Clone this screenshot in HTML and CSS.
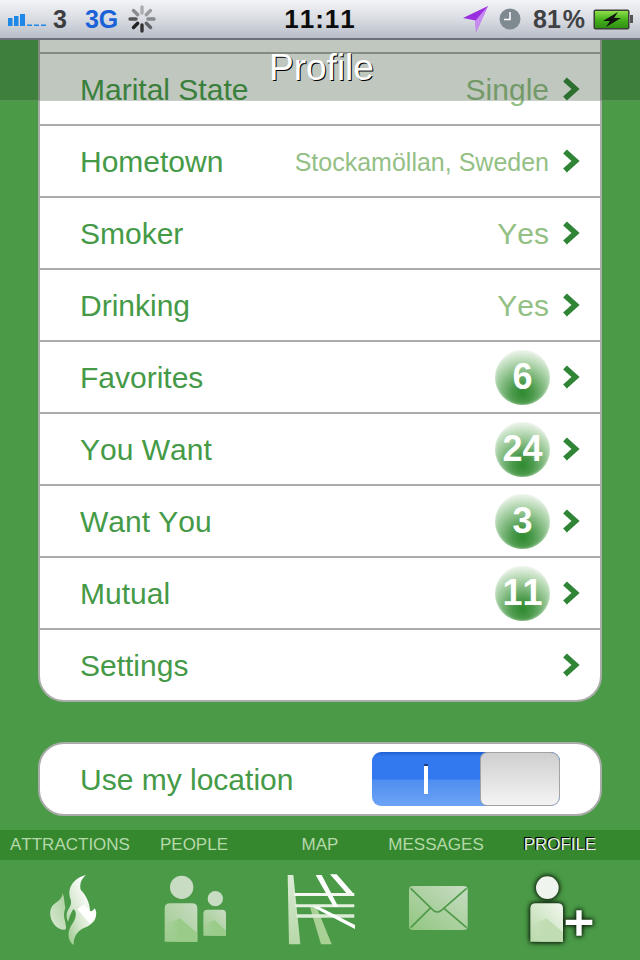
FILE: index.html
```html
<!DOCTYPE html>
<html lang="en">
<head>
    <meta charset="UTF-8">
    <title>Profile</title>
    <link rel="stylesheet" href="styles.css">
</head>
<body>
    <div class="screen">
        <div class="status-bar">
            <div class="status-left">
                <svg class="signal" width="40" height="12" viewBox="0 0 40 12">
                    <rect x="0" y="4" width="4.5" height="8" fill="#1e88e8"/>
                    <rect x="6" y="2" width="4.5" height="10" fill="#1e88e8"/>
                    <rect x="12" y="0" width="5" height="12" fill="#1e88e8"/>
                    <rect x="19" y="10.500" width="5" height="1.500" fill="#1e88e8"/>
                    <rect x="26" y="10.500" width="5" height="1.500" fill="#1e88e8"/>
                    <rect x="33" y="10.500" width="5" height="1.500" fill="#1e88e8"/>
                </svg>
                <span class="carrier">3</span>
                <span class="network">3G</span>
                <svg class="spinner" width="28" height="28" viewBox="-14 -14 28 28" stroke-width="3.400" stroke-linecap="round">
                    <line x1="0" y1="-12" x2="0" y2="-6" stroke="#a9adb0"/>
                    <line x1="8.500" y1="-8.500" x2="4.300" y2="-4.300" stroke="#9a9da0"/>
                    <line x1="12" y1="0" x2="6" y2="0" stroke="#86898c"/>
                    <line x1="8.500" y1="8.500" x2="4.300" y2="4.300" stroke="#606366"/>
                    <line x1="0" y1="12" x2="0" y2="6" stroke="#333"/>
                    <line x1="-8.500" y1="8.500" x2="-4.300" y2="4.300" stroke="#222"/>
                    <line x1="-12" y1="0" x2="-6" y2="0" stroke="#555"/>
                    <line x1="-8.500" y1="-8.500" x2="-4.300" y2="-4.300" stroke="#8a8d90"/>
                </svg>
            </div>
            <div class="status-time">11:11</div>
            <div class="status-right">
                <svg class="arrow" width="28" height="28" viewBox="0 0 28 28">
                    <polygon points="26,1 1,13 13.500,15.500 14,27" fill="#9a2fe0"/>
                    <polygon points="26,1 13.500,15.500 14,27" fill="#c88cf0"/>
                </svg>
                <svg class="clock" width="22" height="22" viewBox="0 0 22 22">
                    <circle cx="11" cy="11" r="10.500" fill="#7f8a90"/>
                    <path d="M11 4V11.500H5" fill="none" stroke="#fff" stroke-width="1.500"/>
                </svg>
                <span class="battery-text">81 %</span>
                <svg class="battery" width="40" height="21" viewBox="0 0 40 21">
                    <defs>
                        <linearGradient id="batt" x1="0" y1="0" x2="0" y2="1">
                            <stop offset="0" stop-color="#8fe04a"/>
                            <stop offset="0.500" stop-color="#46b21c"/>
                            <stop offset="1" stop-color="#2f8f12"/>
                        </linearGradient>
                    </defs>
                    <rect x="0.500" y="0.500" width="36" height="20" rx="2" fill="#3a3f38"/>
                    <rect x="2" y="2" width="33" height="17" fill="url(#batt)"/>
                    <rect x="37" y="6" width="3" height="8" fill="#555"/>
                    <polygon points="25,3 10,12 17,12 13,18 28,9 21,9" fill="#111"/>
                </svg>
            </div>
        </div>

        <div class="nav-bar"><span class="nav-title">Profile</span></div>

        <main class="content">
            <div class="card list-card">
                <div class="row row-sliver"></div>
                <div class="row">
                    <span class="row-label">Marital State</span>
                    <span class="row-value">Single</span>
                    <svg class="chevron" viewBox="0 0 18 24"><path d="M3 2.500L13.500 12L3 21.500"/></svg>
                </div>
                <div class="row">
                    <span class="row-label">Hometown</span>
                    <span class="row-value row-value-small">Stockamöllan, Sweden</span>
                    <svg class="chevron" viewBox="0 0 18 24"><path d="M3 2.500L13.500 12L3 21.500"/></svg>
                </div>
                <div class="row">
                    <span class="row-label">Smoker</span>
                    <span class="row-value">Yes</span>
                    <svg class="chevron" viewBox="0 0 18 24"><path d="M3 2.500L13.500 12L3 21.500"/></svg>
                </div>
                <div class="row">
                    <span class="row-label">Drinking</span>
                    <span class="row-value">Yes</span>
                    <svg class="chevron" viewBox="0 0 18 24"><path d="M3 2.500L13.500 12L3 21.500"/></svg>
                </div>
                <div class="row">
                    <span class="row-label">Favorites</span>
                    <span class="badge">6</span>
                    <svg class="chevron" viewBox="0 0 18 24"><path d="M3 2.500L13.500 12L3 21.500"/></svg>
                </div>
                <div class="row">
                    <span class="row-label">You Want</span>
                    <span class="badge">24</span>
                    <svg class="chevron" viewBox="0 0 18 24"><path d="M3 2.500L13.500 12L3 21.500"/></svg>
                </div>
                <div class="row">
                    <span class="row-label">Want You</span>
                    <span class="badge">3</span>
                    <svg class="chevron" viewBox="0 0 18 24"><path d="M3 2.500L13.500 12L3 21.500"/></svg>
                </div>
                <div class="row">
                    <span class="row-label">Mutual</span>
                    <span class="badge">11</span>
                    <svg class="chevron" viewBox="0 0 18 24"><path d="M3 2.500L13.500 12L3 21.500"/></svg>
                </div>
                <div class="row row-last">
                    <span class="row-label">Settings</span>
                    <svg class="chevron" viewBox="0 0 18 24"><path d="M3 2.500L13.500 12L3 21.500"/></svg>
                </div>
            </div>

            <div class="card location-card">
                <span class="row-label">Use my location</span>
                <div class="switch">
                    <div class="switch-on"><span class="switch-mark"></span></div>
                    <div class="switch-knob"></div>
                </div>
            </div>
        </main>

        <footer class="tab-bar">
            <div class="tab-grid tab-labels">
                <span>ATTRACTIONS</span>
                <span>PEOPLE</span>
                <span>MAP</span>
                <span>MESSAGES</span>
                <span class="tab-active">PROFILE</span>
            </div>
            <div class="tab-grid tab-icons">
                <svg width="68" height="90" viewBox="-12 0 204 270">
                    <defs>
                        <linearGradient id="flame" x1="0.100" y1="1" x2="0.800" y2="0.300">
                            <stop offset="0" stop-color="#9ccb8c"/>
                            <stop offset="0.450" stop-color="#d4e6cd"/>
                            <stop offset="1" stop-color="#ffffff"/>
                        </linearGradient>
                        <linearGradient id="flame-left" x1="1" y1="0" x2="0" y2="1">
                            <stop offset="0" stop-color="#a9cf9b"/>
                            <stop offset="1" stop-color="#dbe9d5"/>
                        </linearGradient>
                    </defs>
                    <path fill="url(#flame)" d="M138 30C112 36 88 56 88 84C88 104 100 108 88 128C80 140 76 150 84 170C88 160 90 148 100 132C112 140 108 158 100 172C92 184 84 196 86 216C88 228 94 236 101 240C100 222 108 200 130 190C150 182 166 170 168 152C170 142 168 136 164 130C158 138 154 140 150 138C150 112 136 88 122 74C118 56 124 42 138 30Z"/>
                    <path fill="url(#flame-left)" d="M68 84C68 100 54 108 42 118C28 130 28 150 36 168C44 184 60 196 74 194C82 192 76 180 76 170C72 158 70 146 76 128C72 112 74 98 68 84Z"/>
                    <polygon fill="#ffffff" points="112,132 150,176 168,150 150,138 132,118"/>
                </svg>
                <svg width="70" height="76" viewBox="477 141 210 228">
                    <defs>
                        <linearGradient id="person" x1="1" y1="0" x2="0" y2="1">
                            <stop offset="0" stop-color="#c8dcc2"/>
                            <stop offset="1" stop-color="#9ccb8c"/>
                        </linearGradient>
                        <linearGradient id="person-low" x1="0" y1="0" x2="1" y2="0">
                            <stop offset="0" stop-color="#9acb89" stop-opacity="0"/>
                            <stop offset="0.450" stop-color="#9acb89"/>
                        </linearGradient>
                    </defs>
                    <circle cx="545" cy="187" r="35" fill="#c7dcc2"/>
                    <path d="M494 350V250Q494 235 510 235H576Q592 235 592 250V350Z" fill="url(#person)"/>
                    <polygon points="540,280 592,325 592,350 494,350 494,300" fill="url(#person-low)"/>
                    <circle cx="646" cy="221" r="23" fill="#c7dcc2"/>
                    <path d="M610 332V266Q610 254 622 254H666Q678 254 678 266V332Z" fill="url(#person)"/>
                    <polygon points="643,285 678,317 678,332 610,332 610,300" fill="url(#person-low)"/>
                </svg>
                <svg width="90" height="90" viewBox="0 0 270 270">
                    <defs>
                        <linearGradient id="road" x1="0" y1="0" x2="0" y2="1">
                            <stop offset="0" stop-color="#dcebd5"/>
                            <stop offset="1" stop-color="#b6d8a8"/>
                        </linearGradient>
                    </defs>
                    <polygon points="38,30 55,30 76,238 42,238" fill="url(#road)"/>
                    <polygon points="105,127 125,127 170,238 138,238" fill="#a9d196"/>
                    <polygon points="57,84 238,84 238,93 58,93" fill="#f2f7ef"/>
                    <polygon points="60,118 238,118 238,127 61,127" fill="#e6f0e0"/>
                    <polygon points="64,148 238,148 238,158 65,158" fill="#dcebd5"/>
                    <polygon points="122,30 140,30 190,125 176,125" fill="#ffffff"/>
                    <polygon points="165,28 185,28 234,84 214,84" fill="#ffffff"/>
                    <polygon points="112,125 132,125 240,180 240,192" fill="#ffffff"/>
                </svg>
                <svg width="64" height="48" viewBox="252 183 192 144">
                    <defs>
                        <linearGradient id="mail" x1="0" y1="1" x2="1" y2="0">
                            <stop offset="0" stop-color="#91c67f"/>
                            <stop offset="1" stop-color="#c8dcc4"/>
                        </linearGradient>
                    </defs>
                    <rect x="267" y="183" width="176" height="132" rx="12" fill="url(#mail)"/>
                    <path d="M272 190L340 256Q352 266 364 256L440 190M272 308L330 250M440 308L372 250" fill="none" stroke="#4f9a49" stroke-width="5"/>
                </svg>
                <svg class="tab-icon-active" width="74" height="80" viewBox="610 135 222 240">
                    <defs>
                        <linearGradient id="me" x1="1" y1="0" x2="0" y2="1">
                            <stop offset="0" stop-color="#f2f7ef"/>
                            <stop offset="1" stop-color="#b7d9a8"/>
                        </linearGradient>
                        <linearGradient id="me-low" x1="0" y1="0" x2="1" y2="0">
                            <stop offset="0" stop-color="#c0dcb2" stop-opacity="0"/>
                            <stop offset="0.450" stop-color="#c0dcb2"/>
                        </linearGradient>
                    </defs>
                    <circle cx="683" cy="188" r="34" fill="#f0f4ee"/>
                    <path d="M632 350V250Q632 235 648 235H714Q730 235 730 250V350Z" fill="url(#me)"/>
                    <polygon points="680,280 730,322 730,350 632,350 632,300" fill="url(#me-low)"/>
                    <path d="M738 284H770V256H786V284H818V300H786V332H770V300H738Z" fill="#fff"/>
                </svg>
            </div>
        </footer>
    </div>
</body>
</html>
```

FILE: styles.css
```css
:root {
    --green: #4a9a47;
    --label-color: #459a47;
    --value-color: #94bf85;
    --line-color: #a9aca8;
    --chevron-color: #2f8535;
}

* {
    margin: 0;
    padding: 0;
    box-sizing: border-box;
}

body {
    font-family: 'Liberation Sans', Arial, sans-serif;
    font-kerning: none;
    background-color: var(--green);
}

.screen {
    position: relative;
    width: 640px;
    height: 960px;
    overflow: hidden;
    display: flex;
    flex-direction: column;
    background-color: var(--green);
}

/* status bar */
.status-bar {
    height: 40px;
    flex: none;
    display: grid;
    grid-template-columns: 1fr auto 1fr;
    align-items: center;
    background: linear-gradient(#f3f4f7, #d9dce2 50%, #b8bdc8);
    border-bottom: 2px solid #69707c;
}

.status-left {
    display: flex;
    align-items: center;
    padding-left: 8px;
}

.signal {
    margin-top: 2px;
}

.carrier {
    font-size: 25px;
    font-weight: bold;
    color: #3b3d40;
    margin-left: 5px;
}

.network {
    font-size: 25px;
    font-weight: bold;
    color: #1b62d8;
    margin-left: 18px;
}

.spinner {
    margin-left: 10px;
}

.status-time {
    font-size: 26px;
    font-weight: bold;
    color: #0c0c0c;
    letter-spacing: 1px;
}

.status-right {
    display: flex;
    align-items: center;
    justify-content: flex-end;
    padding-right: 7px;
}

.clock {
    margin-left: 9px;
}

.battery-text {
    font-size: 25px;
    font-weight: bold;
    color: #3f4144;
    margin-left: 12px;
    word-spacing: -5px;
}

.battery {
    margin-left: 8px;
}

/* see-through title bar over the list */
.nav-bar {
    position: absolute;
    top: 40px;
    left: 0;
    right: 0;
    height: 61px;
    z-index: 2;
    padding-left: 3px;
    text-align: center;
    background-color: rgba(36, 62, 34, 0.29);
    border-bottom: 1px solid rgba(255, 255, 255, 0.15);
}

.nav-title {
    font-size: 37px;
    line-height: 56px;
    color: #fff;
    text-shadow: 1px 1px 0 #000;
}

/* cards */
.content {
    flex: 1;
    padding: 0 38px;
}

.card {
    background-color: #fff;
    border: 2px solid var(--line-color);
}

.list-card {
    border-top: none;
    border-radius: 0 0 26px 26px;
}

.row {
    height: 72px;
    display: flex;
    align-items: center;
    padding: 0 20px 0 40px;
    border-bottom: 2px solid var(--line-color);
}

.row-sliver {
    height: 14px;
}

.row-last {
    height: 70px;
    border-bottom: none;
}

.row-label {
    font-size: 30px;
    color: var(--label-color);
    margin-top: 2px;
}

.row-value {
    margin-left: auto;
    margin-top: 2px;
    font-size: 30px;
    color: var(--value-color);
}

.row-value-small {
    font-size: 25px;
}

.badge {
    margin-left: auto;
    width: 55px;
    height: 55px;
    margin-right: -1px;
    border-radius: 50%;
    display: flex;
    align-items: center;
    justify-content: center;
    font-size: 36px;
    font-weight: bold;
    color: #fff;
    background: radial-gradient(circle at 50% 78%, #2f8a30 0, #4b9a4b 20%, #a5cfa2 55%, #e4f0e2 80%, #f7faf6 100%);
    box-shadow: inset 0 0 3px rgba(255, 255, 255, 0.6);
}

.chevron {
    width: 18px;
    height: 24px;
    margin-left: 13px;
    flex: none;
    fill: none;
    stroke: var(--chevron-color);
    stroke-width: 5.500;
}

.row-last .chevron {
    margin-left: auto;
}

.location-card {
    margin-top: 40px;
    height: 74px;
    border-radius: 26px;
    display: flex;
    align-items: center;
    padding-left: 40px;
}

/* on/off switch */
.switch {
    margin-left: auto;
    margin-right: 40px;
    width: 188px;
    height: 54px;
    display: flex;
    border-radius: 9px;
    overflow: hidden;
    background: linear-gradient(#1f5fd0 0, #3279f0 8%, #3279f0 50%, #4f8ef0 52%, #6ca3f5 100%);
}

.switch-on {
    width: 108px;
    display: flex;
    align-items: center;
    justify-content: center;
}

.switch-mark {
    width: 4px;
    height: 30px;
    background-color: #fff;
    border-top: 2px solid #1d3f80;
}

.switch-knob {
    flex: 1;
    border: 1px solid #a3a3a3;
    border-radius: 7px 9px 9px 7px;
    background: linear-gradient(#cfcfcf, #f4f4f4);
}

/* bottom tabs */
.tab-bar {
    flex: none;
    height: 130px;
}

.tab-grid {
    display: grid;
    grid-template-columns: 140px 108px 144px 88px 160px;
    justify-items: center;
    align-items: center;
}

.tab-labels {
    height: 30px;
    background-color: #36882f;
    font-size: 17px;
    color: #b5d9aa;
    white-space: nowrap;
}

.tab-active {
    color: #e8f2e4;
    text-shadow: -1px -1px 0 #000, -1px 0 0 #000;
}

.tab-icons {
    height: 100px;
    background-color: var(--green);
}

.tab-icon-active {
    filter: drop-shadow(0 0 2px #122a10) drop-shadow(0 0 2px #122a10);
}
```
